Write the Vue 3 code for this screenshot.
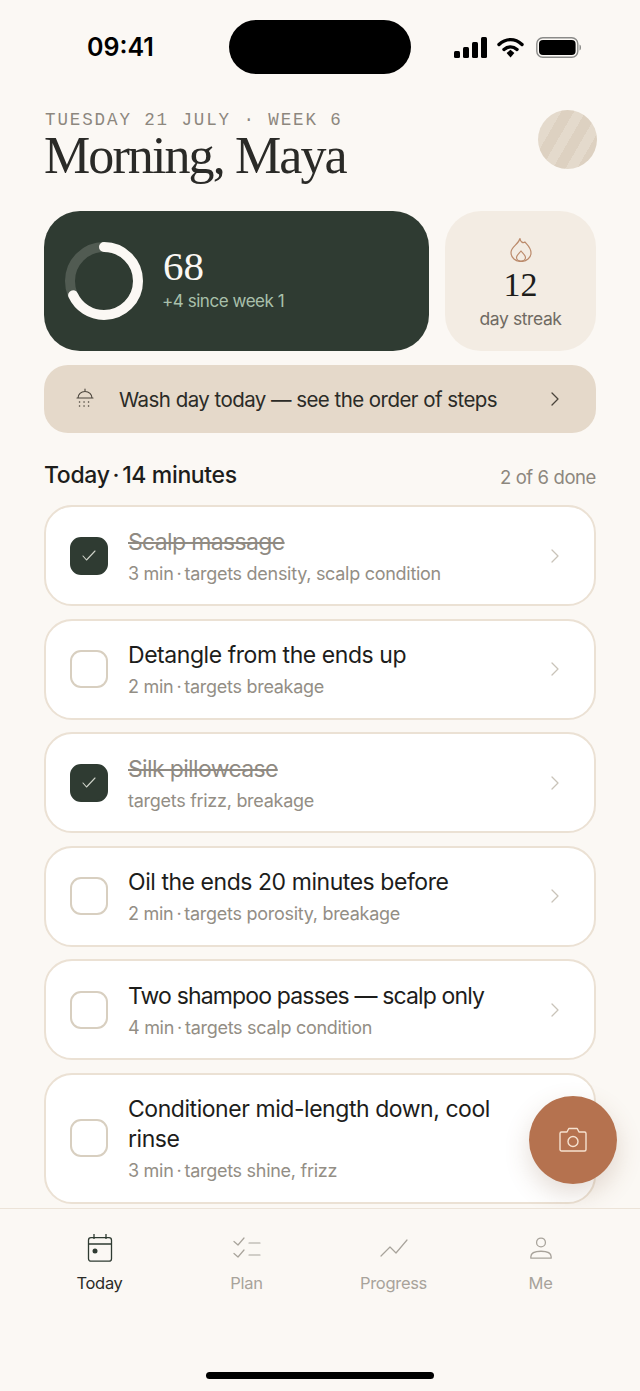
<template>
  <div class="screen">
    <!-- status bar -->
    <div class="status">
      <span class="time">09:41</span>
      <div class="island"></div>
      <div class="status-icons">
        <svg width="33" height="21" viewBox="0 0 33 21">
          <rect x="0" y="14" width="6" height="7" rx="1.5" fill="#000" />
          <rect x="9" y="10" width="6" height="11" rx="1.5" fill="#000" />
          <rect x="18" y="5" width="6" height="16" rx="1.5" fill="#000" />
          <rect x="27" y="0" width="6" height="21" rx="1.5" fill="#000" />
        </svg>
        <svg width="27" height="21" viewBox="0 0 27 21">
          <path d="M2 7.5C9 1 18 1 25 7.5" fill="none" stroke="#000" stroke-width="3.4" stroke-linecap="round" />
          <path d="M7 12.5C11 9 16 9 20 12.5" fill="none" stroke="#000" stroke-width="3.4" stroke-linecap="round" />
          <path d="M9.6 16 13.5 12.8 17.4 16 13.5 20.5Z" fill="#000" />
        </svg>
        <svg class="batt" width="46" height="21" viewBox="0 0 46 21">
          <rect x="0.8" y="0.8" width="41" height="19.4" rx="6" fill="none" stroke="#8a8a88" stroke-width="1.4" />
          <rect x="3" y="3" width="36.6" height="15" rx="4" fill="#000" />
          <path d="M43.500 7.500c2 .6 2 5.400 0 6Z" fill="#8a8a88" />
        </svg>
      </div>
    </div>

    <main class="content">
      <header class="head">
        <div>
          <div class="date">TUESDAY 21 JULY · WEEK 6</div>
          <h1 class="greet">Morning, Maya</h1>
        </div>
        <div class="avatar"></div>
      </header>

      <section class="stats">
        <div class="score">
          <svg class="ring" width="80" height="80" viewBox="0 0 80 80">
            <circle cx="40" cy="40" r="34" fill="none" stroke="rgba(251,248,244,0.17)" stroke-width="10" />
            <circle
              cx="40"
              cy="40"
              r="34"
              fill="none"
              stroke="#fbf8f4"
              stroke-width="10"
              stroke-linecap="round"
              :stroke-dasharray="ringDash"
              transform="rotate(-90 40 40)"
            />
          </svg>
          <div class="score-text">
            <div class="score-num">68</div>
            <div class="score-sub">+4 since week 1</div>
          </div>
        </div>
        <div class="streak">
          <svg width="24" height="25" viewBox="0 0 24 25" fill="none" stroke="#bb8a6b" stroke-width="1.200" stroke-linejoin="round">
            <path d="M11 1.500c.4 3.500 3 5 5 3.500.6 1.500 6 5 6 11 0 4.800-4.500 8.500-10 8.500S2 20.800 2 15.500C2 9.500 9.500 7.500 11 1.500Z" />
            <path d="M12 14c1.500 2 4.500 4 4.500 6.500 0 2-2.200 3.500-4.500 3.500s-4.500-1.500-4.500-3.500c0-2.500 3-4.500 4.500-6.500Z" />
          </svg>
          <div class="streak-num">12</div>
          <div class="streak-label">day streak</div>
        </div>
      </section>

      <div class="wash">
        <svg width="18" height="22" viewBox="0 0 18 22" fill="none" stroke="#4a443b" stroke-width="1.100">
          <path d="M9 1v2.500M2 10c0-3.800 3-6.500 7-6.500s7 2.700 7 6.500ZM1 10h16" stroke-linecap="round" />
          <g stroke-width="1.500" stroke-linecap="round" stroke-dasharray="0.100 4.400">
            <path d="M3.500 14h11M3.500 18h11" />
          </g>
        </svg>
        <span class="wash-text">Wash day today — see the order of steps</span>
        <svg width="10" height="16" viewBox="0 0 10 16" fill="none" stroke="#4a443b" stroke-width="1.300" stroke-linecap="round" stroke-linejoin="round">
          <path d="M2 2l6 6-6 6" />
        </svg>
      </div>

      <div class="section-head">
        <span class="section-title">Today<span class="dot">·</span>14 minutes</span>
        <span class="section-count">2 of 6 done</span>
      </div>

      <ul class="list">
        <li v-for="item in items" :key="item.title" class="row">
          <span class="check" :class="{ done: item.done }">
            <svg v-if="item.done" width="14" height="11" viewBox="0 0 14 11" fill="none" stroke="#cfd3c9" stroke-width="1.100" stroke-linecap="round" stroke-linejoin="round">
              <path d="M1 6l3.500 4L13 1" />
            </svg>
          </span>
          <div class="row-text">
            <div class="row-title" :class="{ struck: item.done, tight: item.tight }">{{ item.title }}</div>
            <div class="row-sub">
              <template v-if="item.time">{{ item.time }}<span class="dot">·</span></template>{{ item.targets }}
            </div>
          </div>
          <svg class="chev" width="10" height="16" viewBox="0 0 10 16" fill="none" stroke="#c9c3b9" stroke-width="1.300" stroke-linecap="round" stroke-linejoin="round">
            <path d="M2 2l6 6-6 6" />
          </svg>
        </li>
      </ul>
    </main>

    <button class="fab" aria-label="Camera">
      <svg width="30" height="26" viewBox="0 0 30 26" fill="none" stroke="#f6e2d0" stroke-width="1.400" stroke-linejoin="round">
        <path d="M2 6.500c0-.8.700-1.500 1.500-1.500H9l1.800-3.500h8.400L21 5h5.500c.8 0 1.500.7 1.500 1.500v16c0 .8-.7 1.500-1.500 1.500h-23c-.8 0-1.500-.7-1.500-1.500Z" />
        <circle cx="15" cy="14.500" r="5" />
      </svg>
    </button>

    <nav class="tabs">
      <div v-for="tab in tabs" :key="tab.label" class="tab" :class="{ active: tab.active }">
        <svg v-if="tab.icon === 'today'" width="28" height="30" viewBox="0 0 28 30" fill="none" stroke="#2f3b32" stroke-width="1.300">
          <rect x="2.500" y="4.700" width="23" height="23.500" rx="2.500" />
          <path d="M2.500 11h23M8 1v5M20 1v5" />
          <circle cx="9" cy="18" r="2.500" fill="#2f3b32" stroke="none" />
        </svg>
        <svg v-else-if="tab.icon === 'plan'" width="30" height="24" viewBox="0 0 30 24" fill="none" stroke="#a8a39b" stroke-width="1.200" stroke-linecap="round" stroke-linejoin="round">
          <path d="M2 5.500l4 3.500 6-7M2 17.500l4 3.500 6-7M17 7h11M17 19h11" />
        </svg>
        <svg v-else-if="tab.icon === 'progress'" width="30" height="24" viewBox="0 0 30 24" fill="none" stroke="#a8a39b" stroke-width="1.200" stroke-linecap="round" stroke-linejoin="round">
          <path d="M2 20l9-9 6 6L28 4" />
        </svg>
        <svg v-else width="24" height="24" viewBox="0 0 26 26" fill="none" stroke="#a8a39b" stroke-width="1.400">
          <circle cx="13" cy="7" r="4.800" />
          <path d="M2 24v-1.500c0-3.500 4-6 11-6s11 2.500 11 6V24Z" stroke-linejoin="round" />
        </svg>
        <span class="tab-label">{{ tab.label }}</span>
      </div>
    </nav>

    <div class="home-bar"></div>
  </div>
</template>

<script setup>
const ringLen = 2 * Math.PI * 34
const ringDash = `${ringLen * 0.68} ${ringLen}`

const items = [
  { title: 'Scalp massage', time: '3 min', targets: 'targets density, scalp condition', done: true },
  { title: 'Detangle from the ends up', time: '2 min', targets: 'targets breakage', done: false },
  { title: 'Silk pillowcase', targets: 'targets frizz, breakage', done: true },
  { title: 'Oil the ends 20 minutes before', time: '2 min', targets: 'targets porosity, breakage', done: false },
  { title: 'Two shampoo passes — scalp only', time: '4 min', targets: 'targets scalp condition', done: false, tight: true },
  { title: 'Conditioner mid-length down, cool rinse', time: '3 min', targets: 'targets shine, frizz', done: false }
]

const tabs = [
  { label: 'Today', icon: 'today', active: true },
  { label: 'Plan', icon: 'plan' },
  { label: 'Progress', icon: 'progress' },
  { label: 'Me', icon: 'me' }
]
</script>

<style>
html,
body {
  margin: 0;
  background: #fbf8f4;
}
</style>

<style scoped>
.screen {
  position: relative;
  display: flex;
  flex-direction: column;
  width: 640px;
  height: 1391px;
  overflow: hidden;
  background: #fbf8f4;
  color: #1d1d1b;
  font-family: Inter, 'Noto Sans', sans-serif;
}

.status {
  display: flex;
  align-items: center;
  height: 54px;
  padding: 20px 0 0 87px;
  flex-shrink: 0;
}

.time {
  width: 142px;
  margin-top: -1px;
  font-size: 25px;
  font-weight: 600;
  color: #000;
}

.island {
  width: 182px;
  height: 54px;
  border-radius: 27px;
  background: #000;
}

.status-icons {
  display: flex;
  align-items: center;
  gap: 10px;
  margin-left: 43px;
}

.batt {
  margin-left: 2px;
}

.content {
  flex: 1;
  min-height: 0;
  padding: 36px 44px 0;
}

.head {
  display: flex;
  justify-content: space-between;
  align-items: flex-start;
  height: 101px;
}

.date {
  margin-top: 1px;
  margin-left: 1px;
  font-family: 'Liberation Mono', monospace;
  font-size: 17.500px;
  line-height: 18px;
  letter-spacing: 1.900px;
  color: #8d877e;
}

.greet {
  margin: 1px 0 0;
  font-family: 'Liberation Serif', serif;
  font-size: 52px;
  line-height: 52px;
  font-weight: 400;
  letter-spacing: -1.900px;
  color: #2a2a27;
}

.avatar {
  width: 59px;
  height: 59px;
  margin-right: -1px;
  border-radius: 50%;
  background: repeating-linear-gradient(120deg, #ddd1c1 0 11px, #e4dacc 11px 21px);
}

.stats {
  display: flex;
  gap: 16px;
  height: 140px;
}

.score {
  display: flex;
  align-items: center;
  gap: 19px;
  flex: 1;
  padding-left: 20px;
  border-radius: 36px;
  background: #2f3b32;
}

.score-text {
  margin-top: -6px;
}

.score-num {
  font-family: 'Liberation Serif', serif;
  font-size: 41px;
  line-height: 44px;
  color: #fbf8f4;
}

.score-sub {
  margin-top: 2px;
  margin-left: -1px;
  font-size: 17px;
  line-height: 22px;
  letter-spacing: -0.450px;
  color: #a9c0ab;
}

.streak {
  display: flex;
  flex-direction: column;
  align-items: center;
  width: 151px;
  padding-top: 26px;
  border-radius: 36px;
  background: #f3ece3;
  box-sizing: border-box;
}

.streak-num {
  margin-top: 5px;
  font-family: 'Liberation Serif', serif;
  font-size: 34px;
  line-height: 36px;
  color: #1d1d1b;
}

.streak-label {
  margin-top: 5px;
  font-size: 17.500px;
  line-height: 22px;
  letter-spacing: -0.400px;
  color: #6f6a62;
}

.wash {
  display: flex;
  align-items: center;
  height: 68px;
  margin-top: 14px;
  padding: 0 36px 0 32px;
  border-radius: 24px;
  background: #e5d9ca;
}

.wash-text {
  flex: 1;
  margin-left: 25px;
  font-size: 20.500px;
  letter-spacing: -0.550px;
  color: #2b2b27;
}

.section-head {
  display: flex;
  justify-content: space-between;
  align-items: baseline;
  height: 30px;
  margin-top: 28px;
}

.section-title {
  font-size: 23px;
  font-weight: 500;
  line-height: 28px;
  letter-spacing: -0.350px;
}

.section-title .dot {
  margin: 0 3px;
}

.section-count {
  position: relative;
  top: 1px;
  font-size: 18.500px;
  letter-spacing: -0.400px;
  color: #8d877e;
}

.list {
  list-style: none;
  display: flex;
  flex-direction: column;
  gap: 12.500px;
  margin: 14px 0 0;
  padding: 0;
}

.row {
  display: flex;
  align-items: center;
  min-height: 101px;
  padding: 0 34px 0 24px;
  border: 2px solid #ebe1d4;
  border-radius: 28px;
  background: #fff;
  box-sizing: border-box;
}

.check {
  display: flex;
  align-items: center;
  justify-content: center;
  flex-shrink: 0;
  width: 38px;
  height: 38px;
  border: 2px solid #d8cfc0;
  border-radius: 11px;
  box-sizing: border-box;
  background: #fff;
}

.check.done {
  border-color: #2f3b32;
  background: #2f3b32;
}

.row-text {
  flex: 1;
  margin: 0 12px 0 20px;
  padding: 19.500px 0;
}

.row-title {
  font-size: 23px;
  line-height: 30px;
  letter-spacing: -0.450px;
  color: #1d1d1b;
}

.row-title.struck {
  letter-spacing: -0.650px;
  color: #8f8a82;
  text-decoration: line-through;
}

.row-title.tight {
  letter-spacing: -0.850px;
}

.row-sub {
  margin-top: 6px;
  font-size: 18px;
  line-height: 22px;
  letter-spacing: -0.280px;
  color: #938e85;
}

.row-sub .dot {
  margin: 0 3px;
}

.fab {
  position: absolute;
  left: 529px;
  top: 1096px;
  display: flex;
  align-items: center;
  justify-content: center;
  width: 88px;
  height: 88px;
  padding: 0;
  border: none;
  border-radius: 50%;
  background: #b5724f;
  box-shadow: 0 10px 26px rgba(120, 80, 50, 0.2);
}

.tabs {
  position: absolute;
  left: 0;
  right: 0;
  top: 1208px;
  display: grid;
  grid-template-columns: repeat(4, 147px);
  justify-content: center;
  height: 183px;
  border-top: 1px solid #ece3d8;
  background: #fbf8f4;
  box-sizing: border-box;
}

.tab {
  display: flex;
  flex-direction: column;
  align-items: center;
  height: 90px;
  padding-top: 24px;
  box-sizing: border-box;
}

.tab svg {
  height: 30px;
}

.tab-label {
  margin-top: 9px;
  font-size: 16.500px;
  line-height: 22px;
  letter-spacing: -0.300px;
  color: #a8a39b;
}

.tab.active .tab-label {
  color: #2b2b27;
}

.home-bar {
  position: absolute;
  left: 206px;
  top: 1372px;
  width: 228px;
  height: 7px;
  border-radius: 4px;
  background: #000;
}
</style>
